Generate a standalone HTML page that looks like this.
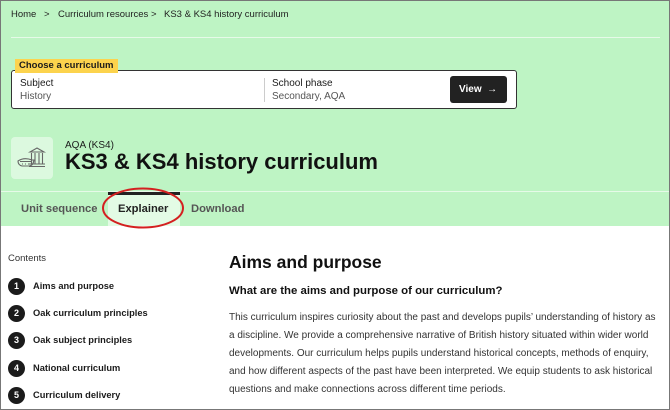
<!DOCTYPE html>
<html><head><meta charset="utf-8"><style>
*{margin:0;padding:0;box-sizing:border-box}
body{width:670px;height:410px;overflow:hidden;font-family:"Liberation Sans",sans-serif;background:#fff;position:relative;color:#1b1b1b}
.frame{position:absolute;inset:0;border:1px solid #777;pointer-events:none;z-index:10}
.green{position:absolute;left:0;top:0;width:670px;height:226px;background:#bef4c4}
.a{position:absolute;white-space:nowrap}
.crumb{top:9px;font-size:9.5px;color:#222}
.num{position:absolute;left:8px;width:17px;height:17px;border-radius:50%;background:#1b1b1b;color:#fff;font-size:9px;font-weight:bold;text-align:center;line-height:17px}
.lbl{position:absolute;left:33px;font-size:9.3px;font-weight:bold;white-space:nowrap}
</style></head><body>
<div class="green"></div>
<div class="a crumb" style="left:11px">Home</div>
<div class="a crumb" style="left:44px">&gt;</div>
<div class="a crumb" style="left:58px">Curriculum resources</div>
<div class="a crumb" style="left:151px">&gt;</div>
<div class="a crumb" style="left:164px">KS3 &amp; KS4 history curriculum</div>
<div class="a" style="left:11px;top:37px;width:649px;height:1px;background:#e6fae8"></div>

<div class="a" style="left:11px;top:70px;width:506px;height:39px;background:#fff;border:1.5px solid #333;border-radius:3px"></div>
<div class="a" style="left:15px;top:59px;height:14px;padding:0 4px;background:#fcd34d;font-size:9.5px;font-weight:bold;line-height:14px">Choose a curriculum</div>
<div class="a" style="left:20px;top:78px;font-size:10px">Subject</div>
<div class="a" style="left:20px;top:91px;font-size:10px;color:#555">History</div>
<div class="a" style="left:264px;top:78px;width:1px;height:24px;background:#ccc"></div>
<div class="a" style="left:272px;top:78px;font-size:10px">School phase</div>
<div class="a" style="left:272px;top:91px;font-size:10px;color:#555">Secondary, AQA</div>
<div class="a" style="left:450px;top:76px;width:57px;height:27px;background:#222;border-radius:3px;color:#fff;font-size:10px;font-weight:bold;line-height:27px;padding-left:9px">View &nbsp;→</div>

<div class="a" style="left:11px;top:137px;width:42px;height:42px;background:#dcf9df;border-radius:4px">
<svg width="42" height="42" viewBox="0 0 42 42" fill="none" stroke="#666" stroke-width="1.1">
<path d="M19 15 L26 11 L33 15 Z M19 15 H33 M20.5 16 V27 M24 16 V27 M28 16 V27 M31.5 16 V27 M18 27 H34 M18 29.5 H34"/>
<path d="M7 24 Q13 20 21 23 L23 23 Q22 29 18 29 H11 Q7 28 7 24 Z M9 24.5 H21 M11 27 h1 M14 27 h1 M17 27 h1"/>
</svg></div>
<div class="a" style="left:65px;top:140px;font-size:10px">AQA (KS4)</div>
<div class="a" style="left:65px;top:149px;font-size:22px;font-weight:bold;color:#111">KS3 &amp; KS4 history curriculum</div>
<div class="a" style="left:0;top:191px;width:670px;height:1px;background:#e6fae8"></div>

<div class="a" style="left:108px;top:192px;width:72px;height:34px;background:#e3fbe5"></div>
<div class="a" style="left:108px;top:192px;width:72px;height:3px;background:#222"></div>
<div class="a" style="left:21px;top:203px;font-size:11.2px;font-weight:bold;color:#555">Unit sequence</div>
<div class="a" style="left:118px;top:203px;font-size:11.2px;font-weight:bold;color:#222">Explainer</div>
<div class="a" style="left:191px;top:203px;font-size:11.2px;font-weight:bold;color:#555">Download</div>
<svg class="a" style="left:100px;top:186px" width="88" height="44"><ellipse cx="43" cy="22" rx="40" ry="19.5" fill="none" stroke="#d42020" stroke-width="2"/></svg>

<div class="a" style="left:8px;top:253px;font-size:9.5px;color:#333">Contents</div>
<div class="num" style="top:278px">1</div><div class="lbl" style="top:281px">Aims and purpose</div>
<div class="num" style="top:305px">2</div><div class="lbl" style="top:308px">Oak curriculum principles</div>
<div class="num" style="top:332px">3</div><div class="lbl" style="top:335px">Oak subject principles</div>
<div class="num" style="top:360px">4</div><div class="lbl" style="top:363px">National curriculum</div>
<div class="num" style="top:387px">5</div><div class="lbl" style="top:390px">Curriculum delivery</div>

<div class="a" style="left:229px;top:252px;font-size:17.5px;font-weight:bold;color:#111">Aims and purpose</div>
<div class="a" style="left:229px;top:285px;font-size:11.4px;font-weight:bold;color:#111">What are the aims and purpose of our curriculum?</div>
<div class="a" style="left:229px;top:309px;font-size:10px;line-height:18px;color:#333">This curriculum inspires curiosity about the past and develops pupils’ understanding of history as<br>a discipline. We provide a comprehensive narrative of British history situated within wider world<br>developments. Our curriculum helps pupils understand historical concepts, methods of enquiry,<br>and how different aspects of the past have been interpreted. We equip students to ask historical<br>questions and make connections across different time periods.</div>
<div class="frame"></div>
</body></html>
